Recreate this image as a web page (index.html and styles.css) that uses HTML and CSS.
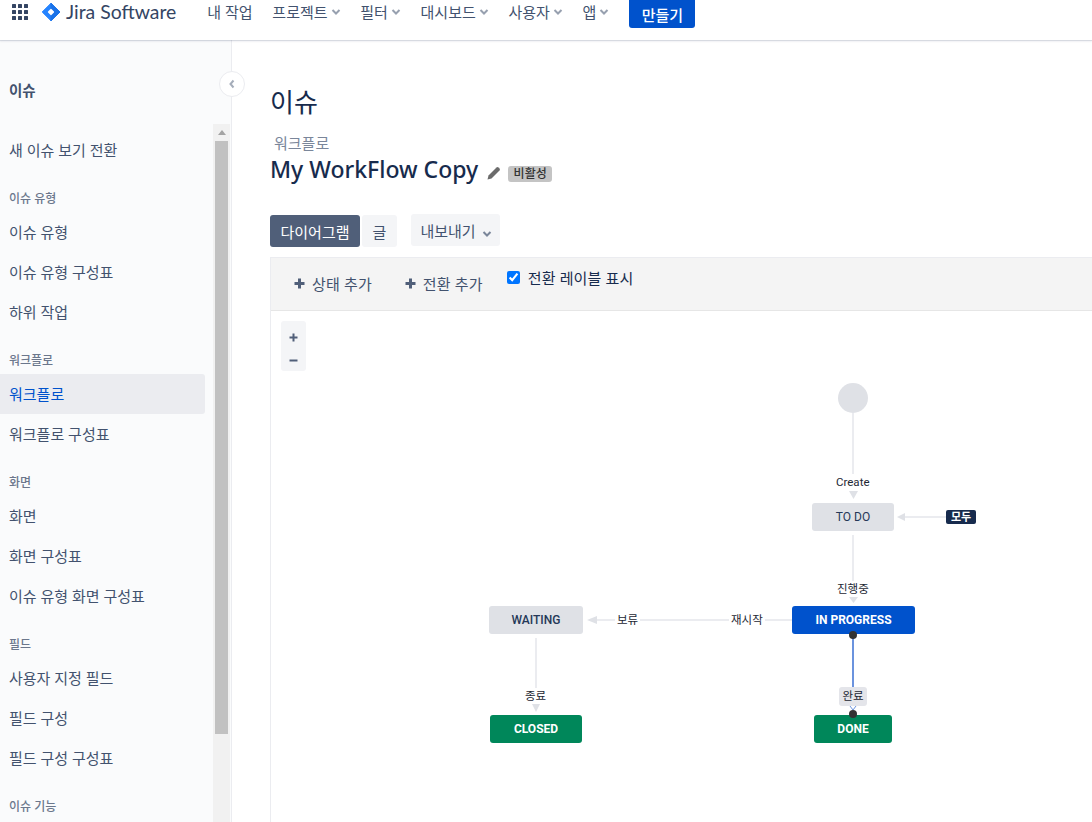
FILE: index.html
```html
<!DOCTYPE html>
<html lang="ko">

<head>
  <meta charset="UTF-8">
  <meta name="viewport" content="width=device-width, initial-scale=1.0">
  <title>이슈 - My WorkFlow Copy</title>
  <link rel="stylesheet" href="styles.css">
</head>

<body>
  <header class="topbar">
    <svg class="apps" width="16" height="16" viewBox="0 0 16 16">
      <g fill="#344563">
        <rect x="0" y="0" width="4" height="4" rx="0.5"/><rect x="6" y="0" width="4" height="4" rx="0.5"/><rect x="12" y="0" width="4" height="4" rx="0.5"/>
        <rect x="0" y="6" width="4" height="4" rx="0.5"/><rect x="6" y="6" width="4" height="4" rx="0.5"/><rect x="12" y="6" width="4" height="4" rx="0.5"/>
        <rect x="0" y="12" width="4" height="4" rx="0.5"/><rect x="6" y="12" width="4" height="4" rx="0.5"/><rect x="12" y="12" width="4" height="4" rx="0.5"/>
      </g>
    </svg>
    <svg class="logo-mark" width="18" height="18" viewBox="0 0 18 18">
      <path d="M9 0.2 L17.8 9 L9 17.8 L0.2 9 Z" fill="#2684ff" stroke="#2684ff" stroke-linejoin="round"/>
      <path d="M9 0.2 L17.8 9 L9 17.8 Z" fill="#1a72e8" stroke="#1a72e8" stroke-linejoin="round"/>
      <rect x="6.6" y="6.6" width="4.8" height="4.8" rx="0.6" fill="#fff" transform="rotate(45 9 9)"/>
    </svg>
    <span class="logo-text">Jira Software</span>
    <nav class="topnav">
      <a class="topnav-item">내 작업</a>
      <a class="topnav-item">프로젝트<svg class="chev" width="10" height="6" viewBox="0 0 10 6"><path d="M1.5 1 L5 4.5 L8.5 1" /></svg></a>
      <a class="topnav-item">필터<svg class="chev" width="10" height="6" viewBox="0 0 10 6"><path d="M1.5 1 L5 4.5 L8.5 1" /></svg></a>
      <a class="topnav-item">대시보드<svg class="chev" width="10" height="6" viewBox="0 0 10 6"><path d="M1.5 1 L5 4.5 L8.5 1" /></svg></a>
      <a class="topnav-item">사용자<svg class="chev" width="10" height="6" viewBox="0 0 10 6"><path d="M1.5 1 L5 4.5 L8.5 1" /></svg></a>
      <a class="topnav-item">앱<svg class="chev" width="10" height="6" viewBox="0 0 10 6"><path d="M1.5 1 L5 4.5 L8.5 1" /></svg></a>
    </nav>
    <button class="create">만들기</button>
  </header>

  <div class="layout">
    <aside class="sidebar">
      <h2 class="side-title">이슈</h2>
      <div class="side-scroll">
        <ul class="side-list">
          <li class="side-item">새 이슈 보기 전환</li>
          <li class="side-group">이슈 유형</li>
          <li class="side-item">이슈 유형</li>
          <li class="side-item">이슈 유형 구성표</li>
          <li class="side-item">하위 작업</li>
          <li class="side-group">워크플로</li>
          <li class="side-item active">워크플로</li>
          <li class="side-item">워크플로 구성표</li>
          <li class="side-group">화면</li>
          <li class="side-item">화면</li>
          <li class="side-item">화면 구성표</li>
          <li class="side-item">이슈 유형 화면 구성표</li>
          <li class="side-group">필드</li>
          <li class="side-item">사용자 지정 필드</li>
          <li class="side-item">필드 구성</li>
          <li class="side-item">필드 구성 구성표</li>
          <li class="side-group">이슈 기능</li>
        </ul>
        <div class="scrollbar">
          <span class="scroll-up"></span>
          <div class="scroll-thumb"></div>
        </div>
      </div>
      <button class="collapse" aria-label="접기">
        <svg width="8" height="10" viewBox="0 0 8 10"><path d="M5.5 1.5 L2.5 5 L5.5 8.5" /></svg>
      </button>
    </aside>

    <main class="content">
      <h1 class="page-title">이슈</h1>
      <div class="crumb">워크플로</div>
      <div class="wf-head">
        <h2 class="wf-name">My WorkFlow Copy</h2>
        <svg class="pencil" width="14" height="14" viewBox="0 0 14 14">
          <path d="M0.5 13.5 L1.5 9.5 L9.5 1.5 Q10.5 0.6 11.5 1.5 L12.5 2.5 Q13.4 3.5 12.5 4.5 L4.5 12.5 Z" fill="#6b6b6b"/>
        </svg>
        <span class="badge">비활성</span>
      </div>

      <div class="view-bar">
        <button class="btn btn-on">다이어그램</button>
        <button class="btn btn-text">글</button>
        <button class="btn btn-export">내보내기<svg class="chev chev-btn" width="10" height="6" viewBox="0 0 10 6"><path d="M1.5 1 L5 4.5 L8.5 1" /></svg></button>
      </div>

      <section class="panel">
        <div class="toolbar">
          <a class="tool tool-status"><svg class="plus" width="11" height="11" viewBox="0 0 11 11"><path d="M5.5 0.5 V10.5 M0.5 5.5 H10.5"/></svg>상태 추가</a>
          <a class="tool"><svg class="plus" width="11" height="11" viewBox="0 0 11 11"><path d="M5.5 0.5 V10.5 M0.5 5.5 H10.5"/></svg>전환 추가</a>
          <label class="show-labels"><input type="checkbox" checked>전환 레이블 표시</label>
        </div>

        <div class="canvas">
          <div class="zoom">
            <svg width="9" height="9" viewBox="0 0 9 9"><path d="M4.5 0.5 V8.5 M0.5 4.5 H8.5"/></svg>
            <svg width="9" height="9" viewBox="0 0 9 9"><path d="M0.5 4.5 H8.5"/></svg>
          </div>

          <svg class="edges" width="821" height="511" viewBox="271 311 821 511">
            <g stroke="#ebecf0" stroke-width="2" fill="none">
              <path d="M853 413 V476"/>
              <path d="M853 535 V581"/>
              <path d="M946 517 H903"/>
              <path d="M597 620 H792"/>
              <path d="M536 638 V688"/>
            </g>
            <g fill="#dfe1e6">
              <path d="M849 491 H858 L853.5 499 Z"/>
              <path d="M849 597 H858 L853.5 603 Z"/>
              <path d="M897 517 L905 513 V521 Z"/>
              <path d="M587 620 L597 616 V624 Z"/>
              <path d="M532 704 H540 L536 712 Z"/>
            </g>
            <path d="M853 635 V690" stroke="#6b93de" stroke-width="2" fill="none"/>
            <path d="M850 706 L853 710 L856 706" stroke="#6b93de" stroke-width="1" fill="none"/>
            <circle cx="853" cy="398" r="15" fill="#dfe1e6"/>
          </svg>

          <div class="node node-todo">TO DO</div>
          <div class="node node-progress">IN PROGRESS</div>
          <div class="node node-waiting">WAITING</div>
          <div class="node node-closed">CLOSED</div>
          <div class="node node-done">DONE</div>

          <span class="all-tag">모두</span>
          <span class="edge-label label-create">Create</span>
          <span class="edge-label label-ing">진행중</span>
          <span class="edge-label label-hold">보류</span>
          <span class="edge-label label-restart">재시작</span>
          <span class="edge-label label-end">종료</span>
          <span class="edge-label label-finish">완료</span>
          <span class="dot dot-a"></span>
          <span class="dot dot-b"></span>
        </div>
      </section>
    </main>
  </div>
</body>

</html>
```

FILE: styles.css
```css
* {
  box-sizing: border-box;
}

html,
body {
  height: 100%;
}

body {
  margin: 0;
  overflow: hidden;
  background: #fff;
  color: #172b4d;
  font-family: "Noto Sans", "Noto Sans CJK KR", sans-serif;
  font-size: 15px;
}

/* top bar */
.topbar {
  height: 40px;
  display: flex;
  align-items: flex-start;
  background: #fff;
  box-shadow: 0 1px 1px rgba(9, 30, 66, 0.13), 0 2px 2px rgba(9, 30, 66, 0.04);
  position: relative;
  z-index: 2;
}

.apps {
  margin: 4px 0 0 12px;
}

.logo-mark {
  margin: 3px 0 0 14px;
}

.logo-text {
  margin-left: 6px;
  font-family: Lato, sans-serif;
  font-size: 19.4px;
  line-height: 24px;
  color: #344563;
}

.topnav {
  display: flex;
  margin-left: 31px;
  gap: 19.7px;
}

.topnav-item {
  display: flex;
  align-items: center;
  height: 22px;
  color: #42526e;
  font-size: 15px;
  white-space: nowrap;
}

.chev {
  margin: 2px 0 0 3px;
  fill: none;
  stroke: #97a0af;
  stroke-width: 2;
}

.create {
  height: 28px;
  width: 66px;
  margin-left: 20px;
  border: 0;
  border-radius: 0 0 3px 3px;
  background: #0052cc;
  color: #fff;
  font-family: inherit;
  font-size: 15px;
  font-weight: 500;
}

/* sidebar */
.layout {
  display: flex;
  height: calc(100% - 40px);
}

.sidebar {
  width: 232px;
  flex: none;
  position: relative;
  background: #fafbfc;
  border-right: 1px solid #ebecf0;
  display: flex;
  flex-direction: column;
}

.side-title {
  margin: 40px 0 0 9px;
  height: 44px;
  font-size: 14.5px;
  line-height: 20px;
  font-weight: 700;
  color: #42526e;
}

.side-scroll {
  flex: 1;
  display: flex;
  min-height: 0;
}

.side-list {
  list-style: none;
  margin: 0;
  padding: 6px 8px 0 0;
  width: 213px;
  overflow: hidden;
}

.side-item {
  height: 40px;
  padding-left: 9px;
  line-height: 40px;
  color: #42526e;
  border-radius: 0 3px 3px 0;
  white-space: nowrap;
}

.side-item.active {
  background: #ebecf0;
  color: #0052cc;
}

.side-group {
  height: 11px;
  margin: 23px 0 8px;
  padding-left: 9px;
  line-height: 11px;
  font-size: 12px;
  font-weight: 500;
  color: #6b778c;
}

.scrollbar {
  width: 17px;
  background: #f1f1f1;
  position: relative;
}

.scroll-up {
  display: block;
  width: 0;
  margin: 6px auto 0;
  border: 4px solid transparent;
  border-top: 0;
  border-bottom: 5px solid #a3a3a3;
}

.scroll-thumb {
  width: 13px;
  height: 593px;
  margin: 6px 0 0 2px;
  background: #c1c1c1;
}

.collapse {
  position: absolute;
  top: 31px;
  left: 219px;
  width: 26px;
  height: 26px;
  padding: 0;
  display: flex;
  align-items: center;
  justify-content: center;
  border: 1px solid #ebecf0;
  border-radius: 50%;
  background: #fff;
}

.collapse svg {
  fill: none;
  stroke: #a5adba;
  stroke-width: 2;
}

/* main */
.content {
  flex: 1;
  min-width: 0;
  padding-left: 38px;
}

.page-title {
  margin: 45px 0 0 0;
  font-size: 26px;
  line-height: 34px;
  font-weight: 400;
  color: #172b4d;
}

.crumb {
  margin: 14px 0 0 4px;
  line-height: 20px;
  color: #7a869a;
}

.wf-head {
  display: flex;
  align-items: center;
  height: 34px;
  margin: -1px 0 0 0;
}

.wf-name {
  margin: 0;
  font-size: 23px;
  line-height: 34px;
  font-weight: 500;
  color: #172b4d;
  white-space: nowrap;
}

.pencil {
  margin: 7px 0 0 9px;
}

.badge {
  margin: 9px 0 0 7px;
  width: 44px;
  height: 16px;
  border-radius: 3px;
  background: #c4c4c4;
  color: #333;
  font-size: 12px;
  font-weight: 500;
  line-height: 16px;
  text-align: center;
}

.view-bar {
  display: flex;
  align-items: flex-start;
  margin-top: 29px;
}

.btn {
  height: 32px;
  border: 0;
  border-radius: 3px;
  background: #f4f5f7;
  color: #42526e;
  font-family: inherit;
  font-size: 15px;
  padding: 0;
  white-space: nowrap;
}

.btn-on {
  width: 90px;
  background: #505f79;
  color: #fff;
}

.btn-text {
  width: 35px;
  margin-left: 2px;
}

.btn-export {
  width: 89px;
  margin: -1px 0 0 14px;
  padding-left: 1px;
}

.chev-btn {
  margin-left: 6px;
  stroke: #7a869a;
}

.panel {
  margin-top: 10px;
  border: 1px solid #ebecf0;
  border-width: 1px 0 0 1px;
}

.toolbar {
  height: 53px;
  display: flex;
  align-items: flex-start;
  background: #f4f4f4;
  border-bottom: 1px solid #e6e6e6;
  color: #42526e;
  letter-spacing: 0.15px;
}

.tool {
  display: flex;
  align-items: center;
  height: 22px;
  margin: 14px 0 0 33px;
  white-space: nowrap;
}

.tool-status {
  margin-left: 23px;
}

.plus {
  margin-right: 7px;
  fill: none;
  stroke: #505f79;
  stroke-width: 3;
}

.show-labels {
  display: flex;
  align-items: center;
  height: 22px;
  margin: 8px 0 0 24px;
  color: #172b4d;
  white-space: nowrap;
}

.show-labels input {
  width: 13px;
  height: 13px;
  margin: 0 8px 0 0;
}

.canvas {
  position: relative;
  height: 511px;
  background: #fff;
}

.zoom {
  position: absolute;
  left: 10px;
  top: 10px;
  width: 25px;
  height: 50px;
  padding: 12px 0 0 8px;
  display: flex;
  flex-direction: column;
  gap: 14px;
  border-radius: 3px;
  background: #f4f5f7;
}

.zoom svg {
  fill: none;
  stroke: #505f79;
  stroke-width: 2;
}

.edges {
  position: absolute;
  left: 0;
  top: 0;
}

.node {
  position: absolute;
  height: 28px;
  line-height: 29px;
  border-radius: 3px;
  text-align: center;
  font-family: Roboto, sans-serif;
  font-size: 12px;
  font-weight: 700;
  color: #fff;
  background: #00875a;
  white-space: nowrap;
}

.node-todo {
  left: 541px;
  top: 192px;
  width: 82px;
  background: #dfe1e6;
  color: #253858;
  font-weight: 400;
}

.node-progress {
  left: 521px;
  top: 295px;
  width: 123px;
  background: #0052cc;
}

.node-waiting {
  left: 218px;
  top: 295px;
  width: 94px;
  background: #dfe1e6;
  color: #253858;
  font-weight: 500;
}

.node-closed {
  left: 219px;
  top: 404px;
  width: 92px;
}

.node-done {
  left: 543px;
  top: 404px;
  width: 78px;
}

.all-tag {
  position: absolute;
  left: 675px;
  top: 199px;
  width: 30px;
  height: 14px;
  border-radius: 2px;
  background: #172b4d;
  color: #fff;
  font-size: 11px;
  font-weight: 700;
  line-height: 14px;
  text-align: center;
}

.edge-label {
  position: absolute;
  padding: 0 2px;
  background: #fff;
  color: #1d2733;
  font-family: Roboto, "Noto Sans CJK KR", sans-serif;
  font-size: 11.5px;
  line-height: 16px;
  white-space: nowrap;
}

.label-create {
  left: 563px;
  top: 163px;
}

.label-ing {
  left: 564px;
  top: 270px;
}

.label-hold {
  left: 344px;
  top: 301px;
}

.label-restart {
  left: 458px;
  top: 301px;
}

.label-end {
  left: 252px;
  top: 377px;
}

.label-finish {
  left: 568px;
  top: 376px;
  width: 28px;
  height: 19px;
  padding: 0;
  border-radius: 3px;
  background: #e4e5ea;
  line-height: 19px;
  text-align: center;
}

.dot {
  position: absolute;
  width: 8px;
  height: 8px;
  border-radius: 50%;
  background: #333;
}

.dot-a {
  left: 578px;
  top: 320px;
}

.dot-b {
  left: 578px;
  top: 399px;
}
```
